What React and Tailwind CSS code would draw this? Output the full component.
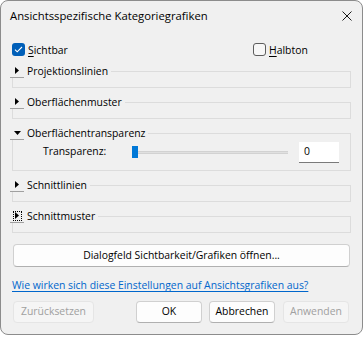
import React from 'react';

const font = { fontFamily: '"Segoe UI", "Open Sans", sans-serif' };

const Expander = ({ open, focused }) => (
  <span className="w-[14px] h-[14px] bg-[#f0f0f0] border-b border-[#a0a0a0] flex items-center justify-center">
    <span
      className={`flex items-center justify-center w-[9px] h-[10px] ${
        focused ? 'border border-dotted border-black' : ''
      }`}
    >
      {open ? (
        <svg width="7" height="4" viewBox="0 0 7 4">
          <path d="M0 0h7L3.5 4z" fill="#000" />
        </svg>
      ) : (
        <svg width="4" height="7" viewBox="0 0 4 7">
          <path d="M0 0v7l4-3.5z" fill="#000" />
        </svg>
      )}
    </span>
  </span>
);

const Group = ({ title, open, focused, children, className = 'h-[24px]' }) => (
  <fieldset className={`w-[339px] border border-[#dcdcdc] mt-[7px] ${className}`}>
    <legend className="-ml-[3px] flex items-center pr-[3px]">
      <Expander open={open} focused={focused} />
      <span className="ml-[3px] text-[10.4px] leading-[14px] text-black">{title}</span>
    </legend>
    {children}
  </fieldset>
);

const Checkbox = ({ checked, label }) => (
  <label className="flex items-center gap-[3px]">
    {checked ? (
      <span className="w-[13px] h-[13px] rounded-[3px] bg-[#005fb8] flex items-center justify-center">
        <svg width="9" height="7" viewBox="0 0 9 7">
          <path d="M1 3.6l2.2 2.2L8 1" stroke="#fff" strokeWidth="1.1" fill="none" />
        </svg>
      </span>
    ) : (
      <span className="w-[13px] h-[13px] rounded-[3px] border border-[#5d5d5d] bg-[#f7f7f7]" />
    )}
    <span className="text-[10.4px] leading-[14px]">
      <span className="underline underline-offset-2">{label[0]}</span>
      {label.slice(1)}
    </span>
  </label>
);

const Btn = ({ children, disabled, className = '' }) => (
  <button
    className={`h-[22px] rounded-[4px] border text-[10.4px] ${
      disabled
        ? 'bg-[#f5f5f5] border-[#e5e5e5] text-[#a0a0a0]'
        : 'bg-[#fdfdfd] border-[#d0d0d0] border-b-[#b0b0b0] text-black'
    } ${className}`}
  >
    {children}
  </button>
);

export default function App() {
  return (
    <div className="w-[364px] h-[338px] bg-white text-black" style={font}>
      <div className="w-[363px] h-[335px] rounded-[8px] border border-[#8c8c8c] bg-[#f0f0f0] flex flex-col overflow-hidden">
        {/* Title bar */}
        <div className="h-[30px] flex items-center justify-between pl-[9px] pr-[10px] shrink-0">
          <span className="text-[11.3px]">Ansichtsspezifische Kategoriegrafiken</span>
          <svg width="10" height="10" viewBox="0 0 10 10">
            <path d="M0.5 0.5l9 9M9.5 0.5l-9 9" stroke="#1a1a1a" strokeWidth="1" />
          </svg>
        </div>

        <div className="pl-[11px] flex flex-col">
          <div className="flex items-center mt-[12px] h-[13px]">
            <div className="w-[241px]">
              <Checkbox checked label="Sichtbar" />
            </div>
            <Checkbox label="Halbton" />
          </div>

          <div className="mt-[1px]" />
          <Group title="Projektionslinien" />
          <Group title="Oberflächenmuster" />
          <Group title="Oberflächentransparenz" open className="h-[45px]">
            <div className="flex items-center h-[24px] pl-[30px]">
              <span className="text-[10.4px] w-[89px]">Transparenz:</span>
              <div className="relative w-[156px] h-[12px] flex items-center">
                <div className="w-full h-[3px] bg-[#e0e0e0] border-y border-[#d2d2d2]" />
                <div className="absolute left-0 top-0 w-[6px] h-[12px] bg-[#0078d7]" />
              </div>
              <div className="ml-[11px] w-[40px] h-[21px] bg-white border-b border-[#7a7a7a] flex items-center pl-[5px] text-[10.4px]">
                0
              </div>
            </div>
          </Group>
          <Group title="Schnittlinien" />
          <Group title="Schnittmuster" focused />

          <Btn className="mt-[11px] ml-[1px] w-[337px] h-[23px]">Dialogfeld Sichtbarkeit/Grafiken öffnen...</Btn>

          <a className="mt-[11px] text-[10.4px] leading-[15px] text-[#0066cc] underline underline-offset-2 w-fit">
            Wie wirken sich diese Einstellungen auf Ansichtsgrafiken aus?
          </a>

          <div className="flex items-center mt-[8px] pl-[1px]">
            <Btn disabled className="w-[81px]">Zurücksetzen</Btn>
            <Btn className="w-[66px] ml-[42px]">OK</Btn>
            <Btn className="w-[66px] ml-[7px]">Abbrechen</Btn>
            <Btn disabled className="w-[66px] ml-[8px]">Anwenden</Btn>
          </div>
        </div>
      </div>
    </div>
  );
}
